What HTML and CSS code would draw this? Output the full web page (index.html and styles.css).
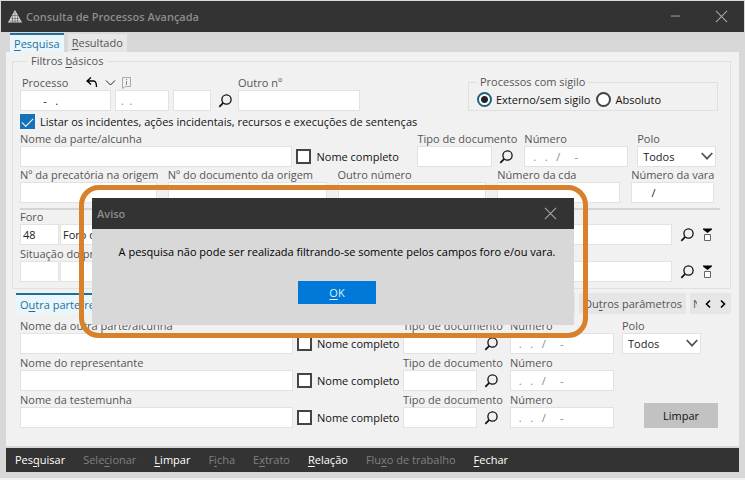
FILE: index.html
```html
<!DOCTYPE html>
<html lang="pt-BR">
<head>
<meta charset="utf-8">
<title>Consulta de Processos Avançada</title>
<link rel="stylesheet" href="styles.css">
</head>
<body>
<svg class="defs" aria-hidden="true">
  <symbol id="search" viewBox="0 0 14 14"><circle cx="8.500" cy="5.500" r="4.600" fill="none" stroke="currentColor" stroke-width="1.300"/><path d="M5.200 8.800 1.300 12.800" stroke="currentColor" stroke-width="1.700"/></symbol>
  <symbol id="close" viewBox="0 0 14 14"><path d="M1 1l12 12M13 1 1 13" stroke="currentColor" stroke-width="1.1"/></symbol>
  <symbol id="chevron" viewBox="0 0 12 8"><path d="M.7 1 6 6.600 11.300 1" fill="none" stroke="currentColor" stroke-width="1.800"/></symbol>
  <symbol id="expand" viewBox="0 0 9 13"><path d="M0 .5h9v1L4.500 5 0 1.500z" fill="#000"/><path d="M1.500 6.500h6v6h-6z" fill="#fff" stroke="#666"/></symbol>
</svg>
<div class="window">
  <header class="titlebar">
    <svg class="logo" viewBox="0 0 14 14"><path d="M7 0 14 12.500H0z" fill="#ddd"/><path d="M3 8.500h8M1.500 11h11M5 5.500h5M7 2v11M4.500 5v8M9.500 6v7" stroke="#555" stroke-width=".6"/></svg>
    <h1>Consulta de Processos Avançada</h1>
    <button class="win-btn" aria-label="Minimizar"><svg viewBox="0 0 14 14"><path d="M2 6.500h10" stroke="currentColor"/></svg></button>
    <button class="win-btn" aria-label="Fechar"><svg><use href="#close"/></svg></button>
  </header>
  <nav class="tabs">
    <button class="tab active"><u>P</u>esquisa</button>
    <button class="tab"><u>R</u>esultado</button>
  </nav>
  <main class="panel">
    <fieldset class="filters">
      <legend>Filtros <u>b</u>ásicos</legend>
      <div class="row process">
        <div class="field">
          <div class="label-line">
            <label for="proc">Processo</label>
            <button class="icon" aria-label="Desfazer"><svg viewBox="0 0 12 12"><path d="M5 .5 1 4l4 3.500M1 4h6.500Q10.500 4 10.500 10" fill="none" stroke="#000" stroke-width="1.300"/></svg></button>
            <button class="icon" aria-label="Opções"><svg viewBox="0 0 12 12"><path d="M2 3.500 6.500 8 11 3.500" fill="none" stroke="#222"/></svg></button>
            <svg class="info" viewBox="0 0 9 12"><path d="M.5.5h8v9H3.500L.5 11.500z" fill="none" stroke="#aaa"/><path d="M4.500 4v4M4.500 2v1" stroke="#888"/></svg>
          </div>
          <div class="process-inputs">
            <input id="proc" value="      -   .">
            <input class="soft" aria-label="Ano" value=".  .">
            <input aria-label="Foro do processo">
          </div>
        </div>
        <button class="icon find" aria-label="Localizar"><svg><use href="#search"/></svg></button>
        <div class="field"><label for="outro">Outro nº</label><input id="outro"></div>
        <fieldset class="secrecy">
          <legend>Processos com sigilo</legend>
          <label><input type="radio" name="sigilo" checked>Externo/sem sigilo</label>
          <label><input type="radio" name="sigilo">Absoluto</label>
        </fieldset>
      </div>
      <label class="check list"><input type="checkbox" checked>Listar os incidentes, ações incidentais, recursos e execuções de sentenças</label>
      <div class="row party">
        <div class="field"><label for="parte">Nome da parte/alcunha</label><input id="parte"></div>
        <label class="check"><input type="checkbox">Nome completo</label>
        <div class="field"><label for="tipo">Tipo de documento</label><input id="tipo"></div>
        <button class="icon find" aria-label="Localizar"><svg><use href="#search"/></svg></button>
        <div class="field"><label for="num">Número</label><input id="num" class="soft" value=" .   .   /     -"></div>
        <div class="field"><label for="polo">Polo</label><div class="select"><select id="polo"><option>Todos</option></select><svg><use href="#chevron"/></svg></div></div>
      </div>
      <div class="row numbers">
        <div class="field"><label for="prec">Nº da precatória na origem</label><input id="prec"></div>
        <div class="field"><label for="doc">Nº do documento da origem</label><input id="doc"></div>
        <div class="field"><label for="onum">Outro número</label><input id="onum"></div>
        <div class="field"><label for="cda">Número da cda</label><input id="cda"></div>
        <div class="field"><label for="vara">Número da vara</label><input id="vara" value="     /"></div>
      </div>
      <hr>
      <div class="row court">
        <div class="field"><label for="foro">Foro</label><input id="foro" value="48"></div>
        <input aria-label="Nome do foro" value="Foro de">
        <button class="icon find" aria-label="Localizar"><svg><use href="#search"/></svg></button>
        <button class="icon more" aria-label="Expandir"><svg><use href="#expand"/></svg></button>
      </div>
      <div class="row court">
        <div class="field"><label for="sit">Situação do processo</label><input id="sit"></div>
        <input aria-label="Descrição da situação">
        <button class="icon find" aria-label="Localizar"><svg><use href="#search"/></svg></button>
        <button class="icon more" aria-label="Expandir"><svg><use href="#expand"/></svg></button>
      </div>
    </fieldset>
    <nav class="subtabs">
      <button class="subtab active">O<u>u</u>tra parte/representante</button>
      <button class="subtab wide" aria-label="Outros filtros"></button>
      <button class="subtab">Ou<u>t</u>ros parâmetros</button>
      <div class="pager"><span>N</span>
        <button class="icon" aria-label="Anterior"><svg viewBox="0 0 8 10"><path d="M6 1.500 2.500 5 6 8.500" fill="none" stroke="#000" stroke-width="1.600"/></svg></button>
        <button class="icon" aria-label="Próximo"><svg viewBox="0 0 8 10"><path d="M2 1.500 5.500 5 2 8.500" fill="none" stroke="#000" stroke-width="1.600"/></svg></button>
      </div>
    </nav>
    <section class="others">
      <div class="row person">
        <div class="field"><label for="n1">Nome da outra parte/alcunha</label><input id="n1"></div>
        <label class="check"><input type="checkbox">Nome completo</label>
        <div class="field"><label for="t1">Tipo de documento</label><input id="t1"></div>
        <button class="icon find" aria-label="Localizar"><svg><use href="#search"/></svg></button>
        <div class="field"><label for="d1">Número</label><input id="d1" class="soft" value=" .   .   /     -"></div>
        <div class="field"><label for="polo2">Polo</label><div class="select"><select id="polo2"><option>Todos</option></select><svg><use href="#chevron"/></svg></div></div>
      </div>
      <div class="row person">
        <div class="field"><label for="n2">Nome do representante</label><input id="n2"></div>
        <label class="check"><input type="checkbox">Nome completo</label>
        <div class="field"><label for="t2">Tipo de documento</label><input id="t2"></div>
        <button class="icon find" aria-label="Localizar"><svg><use href="#search"/></svg></button>
        <div class="field"><label for="d2">Número</label><input id="d2" class="soft" value=" .   .   /     -"></div>
      </div>
      <div class="row person">
        <div class="field"><label for="n3">Nome da testemunha</label><input id="n3"></div>
        <label class="check"><input type="checkbox">Nome completo</label>
        <div class="field"><label for="t3">Tipo de documento</label><input id="t3"></div>
        <button class="icon find" aria-label="Localizar"><svg><use href="#search"/></svg></button>
        <div class="field"><label for="d3">Número</label><input id="d3" class="soft" value=" .   .   /     -"></div>
        <button class="clear">Limpar</button>
      </div>
    </section>
  </main>
  <footer class="actions">
    <button>Pes<u>q</u>uisar</button>
    <button disabled>Sele<u>c</u>ionar</button>
    <button><u>L</u>impar</button>
    <button disabled>F<u>i</u>cha</button>
    <button disabled>E<u>x</u>trato</button>
    <button><u>R</u>elação</button>
    <button disabled>Flu<u>x</u>o de trabalho</button>
    <button><u>F</u>echar</button>
  </footer>
  <div class="highlight">
    <div class="dialog" role="alertdialog" aria-labelledby="aviso">
      <header><h2 id="aviso">Aviso</h2><button class="win-btn" aria-label="Fechar aviso"><svg><use href="#close"/></svg></button></header>
      <div class="dialog-body">
        <p>A pesquisa não pode ser realizada filtrando-se somente pelos campos foro e/ou vara.</p>
        <button class="ok"><u>O</u>K</button>
      </div>
    </div>
  </div>
</div>
</body>
</html>
```
FILE: styles.css
```css
* { box-sizing: border-box; }
body { margin: 0; background: #f1f1f1; color: #111; font: 11px/14px "Open Sans", "Noto Sans", sans-serif; }
button, input, select { font: inherit; color: inherit; margin: 0; padding: 0; }
button { border: 0; background: none; white-space: nowrap; }
svg { display: block; }
u { text-underline-offset: 2px; }
.defs { position: absolute; width: 0; height: 0; }

.window { position: relative; background: #d8d8d8; padding: 1px 0 6px; }
.titlebar { display: flex; align-items: center; height: 31px; margin: 0 1px; padding: 0 10px 0 7px; background: #333; color: #aaa; }
.logo { width: 14px; height: 14px; margin-right: 4px; }
h1, h2 { flex: 1; margin: 0; font-size: 11px; font-weight: 600; color: #8c8c8c; }
.win-btn { display: grid; place-items: center; width: 26px; height: 24px; margin-left: 20px; color: #aaa; }
.win-btn svg { width: 13px; height: 13px; }

.tabs { display: flex; gap: 4px; height: 20px; padding: 1px 10px 0; align-items: flex-end; }
.tab { height: 18px; padding: 0 4px; background: #e6e6e6; color: #555; }
.tab.active { height: 19px; border-top: 2px solid #1f6f9c; background: #e9f6fc; color: #1f6f9c; }

.panel { margin: 0 6px; padding: 1px 8px 18px 6px; background: #f1f1f1; }
fieldset { min-width: 0; margin: 0; border: 1px solid #e0e0e0; }
legend { color: #555; }
.filters { padding: 6px 10px 6px 7px; }
.filters > legend { margin-left: 7px; padding: 0 4px; line-height: 16px; }
.row { display: grid; align-items: end; }
.field { display: flex; flex-direction: column; min-width: 0; color: #555; }
.field label { white-space: nowrap; }
input, select { color: #222; }
.field input, .row > input, select { width: 100%; height: 21px; min-width: 0; padding: 0 5px; border: 1px solid #e2e2e2; background: #fff; border-radius: 0; }
#foro, .court > input { padding: 0 2px; }
input.soft { color: #888; }
.icon { display: grid; place-items: center; height: 21px; color: #111; }
.find { width: 28px; justify-self: start; }
.find svg { width: 14px; height: 14px; }
.more svg { width: 9px; height: 13px; }

.process { grid-template-columns: 191fr 27px 122fr 108fr 250fr 2fr; }
.label-line { display: flex; align-items: center; height: 14px; gap: 6px; padding-left: 2px; }
.label-line label { margin-right: 12px; }
.label-line svg { width: 12px; height: 12px; }
.label-line .icon { height: 12px; }
.label-line .info { width: 9px; }
.process-inputs { display: grid; grid-template-columns: 91fr 54fr 38fr; gap: 4px; }
.secrecy { grid-column: 5; display: flex; gap: 6px; height: 36px; padding: 1px 8px; align-items: center; }
.secrecy legend { margin-left: 0; padding: 0 3px; }
.secrecy label { display: flex; align-items: center; gap: 4px; white-space: nowrap; }
input[type="radio"] { appearance: none; width: 15px; height: 15px; border: 2px solid #444; border-radius: 50%; background: #fff; }
input[type="radio"]:checked { border-color: #1f6380; background: radial-gradient(circle, #222 0 3px, #fff 4px); }

.check { display: flex; align-items: center; gap: 5px; height: 21px; white-space: nowrap; }
input[type="checkbox"] { appearance: none; flex: none; width: 15px; height: 15px; border: 2px solid #444; background: #fff; }
input[type="checkbox"]:checked { display: grid; place-items: center; border-color: #1672b8; background: #1672b8; }
input[type="checkbox"]:checked::after { content: ""; width: 10px; height: 5px; border: solid #fff; border-width: 0 0 1px 1px; rotate: -45deg; translate: 0 -1px; }
.party { grid-template-columns: 273fr 125px 75fr 32px 104fr 9px 79fr 4px; }
.party .check, .person .check { padding-left: 4px; }
.party > :nth-child(6) { grid-column: 7; }
.select { position: relative; }
.select select { appearance: none; display: block; }
.select svg { position: absolute; right: 3px; top: 6px; width: 12px; height: 8px; pointer-events: none; }
.numbers { grid-template-columns: 137fr 159fr 149fr 123fr 83fr; gap: 11px; padding: 1px 6px 0 0; }
hr { height: 2px; margin: 5px 0 0; border: 0; background: #d4d4d4; }
.court { grid-template-columns: 39px 1fr 27px 13px 5px; column-gap: 1px; margin-bottom: 2px; }
.court:last-child { margin-bottom: 0; }

.subtabs { display: flex; gap: 4px; height: 21px; margin-top: 4px; padding-left: 4px; color: #555; }
.subtab { padding: 0 4px; background: #e6e6e6; }
.subtab.active { text-align: left; border-top: 2px solid #1f6f9c; background: #e9f6fc; color: #1f6f9c; }
.subtab.wide { flex: 1; }
.pager { display: flex; align-items: center; width: 41px; padding: 0 3px; gap: 7px; background: #e6e6e6; }
.pager span { width: 4px; overflow: hidden; }
.pager svg { width: 8px; height: 10px; }

.others { display: grid; gap: 2px; padding: 5px 13px 0 8px; }
.person { grid-template-columns: 273fr 110px 74fr 33px 104fr 8px 79fr 17fr; }
.person > :nth-child(6) { grid-column: 7; }
.person > .clear { grid-column: 7 / 9; justify-self: end; width: 74px; height: 25px; background: #c2c2c2; color: #111; }

.actions { display: flex; align-items: center; gap: 18px; height: 24px; margin: 2px 6px 0; padding: 0 9px; background: #333; color: #fff; }
.actions button:disabled { color: #808080; }

.highlight { position: absolute; top: 185px; left: 79px; right: 157px; padding: 8px 9px 8px 8px; border: 5px solid #d8812a; border-radius: 20px; }
.dialog { background: #d8d8d8; }
.dialog header { display: flex; align-items: center; height: 31px; padding: 0 11px 0 5px; background: #333; }
.dialog-body { display: grid; justify-items: center; gap: 22px; padding: 16px 0 21px 8px; }
.dialog p { margin: 0; color: #000; white-space: nowrap; }
.ok { width: 78px; height: 23px; background: #0078d7; color: #d9f2ff; }
```
